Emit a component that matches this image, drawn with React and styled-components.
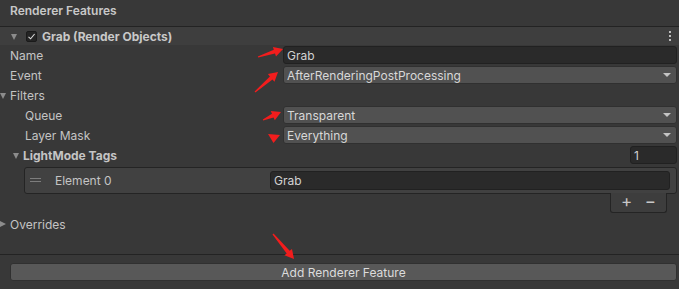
import React from "react";
import styled, { createGlobalStyle } from "styled-components";

const Global = createGlobalStyle`
  html, body { margin: 0; padding: 0; background: #383838; }
  #root { width: 679px; height: 289px; overflow: hidden; position: relative; }
  * { box-sizing: border-box; }
`;

const Page = styled.div`
  position: relative;
  width: 679px;
  height: 289px;
  background: #383838;
  font-family: Inter, "Noto Sans", sans-serif;
  font-size: 12px;
  color: #c4c4c4;
  display: flex;
  flex-direction: column;
`;

const Title = styled.div`
  height: 27px;
  padding: 2px 0 7px 10px;
  display: flex;
  align-items: center;
  font-weight: 600;
  color: #c8c8c8;
  border-bottom: 1px solid #232323;
`;

const Header = styled.div`
  height: 18px;
  background: #3e3e3e;
  display: flex;
  align-items: center;
  padding-left: 11px;
  padding-right: 8px;
  font-weight: 700;
  color: #c8c8c8;
`;

const Fold = styled.span`
  width: 0;
  height: 0;
  flex: none;
  border-style: solid;
  ${(p) =>
    p.$open
      ? `border-width: 6px 3.5px 0 3.5px; border-color: #8c8c8c transparent transparent transparent; margin-top: 1px;`
      : `border-width: 3.5px 0 3.5px 6px; border-color: transparent transparent transparent #8c8c8c;`}
`;

const Check = styled.span`
  width: 11px;
  height: 11px;
  margin-left: 9px;
  margin-right: 5px;
  border-radius: 2px;
  background: #242424;
  border: 1px solid #1a1a1a;
  display: flex;
  align-items: center;
  justify-content: center;
  flex: none;
`;

const Grow = styled.span`
  flex: 1;
`;

const Kebab = styled.span`
  display: flex;
  flex-direction: column;
  gap: 2px;
  span {
    width: 2px;
    height: 2px;
    background: #bdbdbd;
  }
`;

const Rows = styled.div`
  display: flex;
  flex-direction: column;
  gap: 2px;
  padding-top: 1px;
`;

const Row = styled.div`
  height: 18px;
  display: flex;
  align-items: center;
  padding-left: ${(p) => p.$indent}px;
  padding-right: 2px;
  margin-top: ${(p) => p.$top || 0}px;
`;

const Label = styled.span`
  flex: 1;
  display: flex;
  align-items: center;
  gap: 4px;
  font-weight: ${(p) => (p.$bold ? 700 : 400)};
  white-space: nowrap;
`;

const TextField = styled.div`
  width: ${(p) => p.$w}px;
  height: ${(p) => p.$h || 18}px;
  background: #2a2a2a;
  border: 1px solid #212121;
  border-radius: 3px;
  display: flex;
  align-items: center;
  padding-left: 3px;
  color: #d2d2d2;
`;

const Dropdown = styled.div`
  width: 394px;
  height: 18px;
  background: #515151;
  border: 1px solid #303030;
  border-radius: 3px;
  display: flex;
  align-items: center;
  padding: 0 5px 0 3px;
  color: #d8d8d8;
`;

const Caret = styled.span`
  margin-left: auto;
  width: 0;
  height: 0;
  border-style: solid;
  border-width: 4px 4px 0 4px;
  border-color: #c4c4c4 transparent transparent transparent;
`;

const ListBox = styled.div`
  margin: 3px 2px 0 24px;
  border: 1px solid #242424;
  border-radius: 3px;
  background: #414141;
  padding: 2px 6px 3px 5px;
  display: flex;
  align-items: center;
  height: 27px;
  position: relative;
  z-index: 1;
`;

const Handle = styled.span`
  width: 11px;
  display: flex;
  flex-direction: column;
  gap: 2px;
  margin-right: 14px;
  span {
    height: 1px;
    background: #7d7d7d;
  }
`;

const ListFooter = styled.div`
  align-self: flex-end;
  margin: -1px 12px 0 0;
  width: 57px;
  height: 20px;
  border: 1px solid #242424;
  border-top: none;
  border-radius: 0 0 3px 3px;
  background: #3d3d3d;
  display: flex;
  align-items: center;
  justify-content: space-between;
  padding: 0 10px 2px 10px;
  color: #c8c8c8;
  font-size: 17px;
  line-height: 1;
  position: relative;
  z-index: 2;
`;

const Sep = styled.div`
  height: 1px;
  background: #232323;
  margin-top: ${(p) => p.$top}px;
`;

const Button = styled.div`
  margin: 8px 2px 0 10px;
  height: 18px;
  background: #585858;
  border: 1px solid #303030;
  border-radius: 3px;
  display: flex;
  align-items: center;
  justify-content: center;
  color: #dcdcdc;
`;

const Overlay = styled.svg`
  position: absolute;
  left: 0;
  top: 0;
  pointer-events: none;
`;

function arrowPts(x1, y1, x2, y2) {
  const dx = x2 - x1;
  const dy = y2 - y1;
  const L = Math.hypot(dx, dy);
  const ux = dx / L;
  const uy = dy / L;
  const nx = -uy;
  const ny = ux;
  const hl = 9;
  const bx = x2 - ux * hl;
  const by = y2 - uy * hl;
  const p = (x, y) => `${x.toFixed(1)},${y.toFixed(1)}`;
  return [
    p(x1 + nx * 0.6, y1 + ny * 0.6),
    p(bx + nx * 2, by + ny * 2),
    p(bx + nx * 5, by + ny * 5),
    p(x2, y2),
    p(bx - nx * 5, by - ny * 5),
    p(bx - nx * 2, by - ny * 2),
    p(x1 - nx * 0.6, y1 - ny * 0.6),
  ].join(" ");
}

const arrows = [
  [258, 57, 283, 49],
  [255, 92, 278, 72],
  [263, 120, 281, 112],
  [242, 193, 265, 181],
  [273, 234, 294, 259],
];

export default function App() {
  return (
    <>
      <Global />
      <Page>
        <Title>Renderer Features</Title>
        <Header>
          <Fold $open />
          <Check>
            <svg width="9" height="9" viewBox="0 0 9 9">
              <path d="M1.5 4.8 L3.6 6.8 L7.6 2" fill="none" stroke="#d8d8d8" strokeWidth="1.1" />
            </svg>
          </Check>
          <span>Grab (Render Objects)</span>
          <Grow />
          <Kebab>
            <span />
            <span />
            <span />
          </Kebab>
        </Header>
        <Rows>
          <Row $indent={10}>
            <Label>Name</Label>
            <TextField $w={394}>Grab</TextField>
          </Row>
          <Row $indent={10}>
            <Label>Event</Label>
            <Dropdown>
              AfterRenderingPostProcessing
              <Caret />
            </Dropdown>
          </Row>
          <Row $indent={0}>
            <Label>
              <Fold $open />
              Filters
            </Label>
          </Row>
          <Row $indent={25}>
            <Label>Queue</Label>
            <Dropdown>
              Transparent
              <Caret />
            </Dropdown>
          </Row>
          <Row $indent={25}>
            <Label>Layer Mask</Label>
            <Dropdown>
              Everything
              <Caret />
            </Dropdown>
          </Row>
          <Row $indent={13}>
            <Label $bold>
              <Fold $open />
              LightMode Tags
            </Label>
            <TextField $w={47}>1</TextField>
          </Row>
        </Rows>
        <ListBox>
          <Handle>
            <span />
            <span />
          </Handle>
          <Label>Element 0</Label>
          <TextField $w={400} $h={19}>
            Grab
          </TextField>
        </ListBox>
        <ListFooter>
          <span>+</span>
          <span>−</span>
        </ListFooter>
        <Row $indent={0} $top={2}>
          <Label>
            <Fold />
            Overrides
          </Label>
        </Row>
        <Sep $top={21} />
        <Button>Add Renderer Feature</Button>
        <Overlay width="679" height="289" viewBox="0 0 679 289">
          {arrows.map((a, i) => (
            <polygon key={i} points={arrowPts(...a)} fill="#f21d1d" />
          ))}
          <polygon points="268,134 280,135 273.5,143" fill="#f21d1d" />
        </Overlay>
      </Page>
    </>
  );
}
